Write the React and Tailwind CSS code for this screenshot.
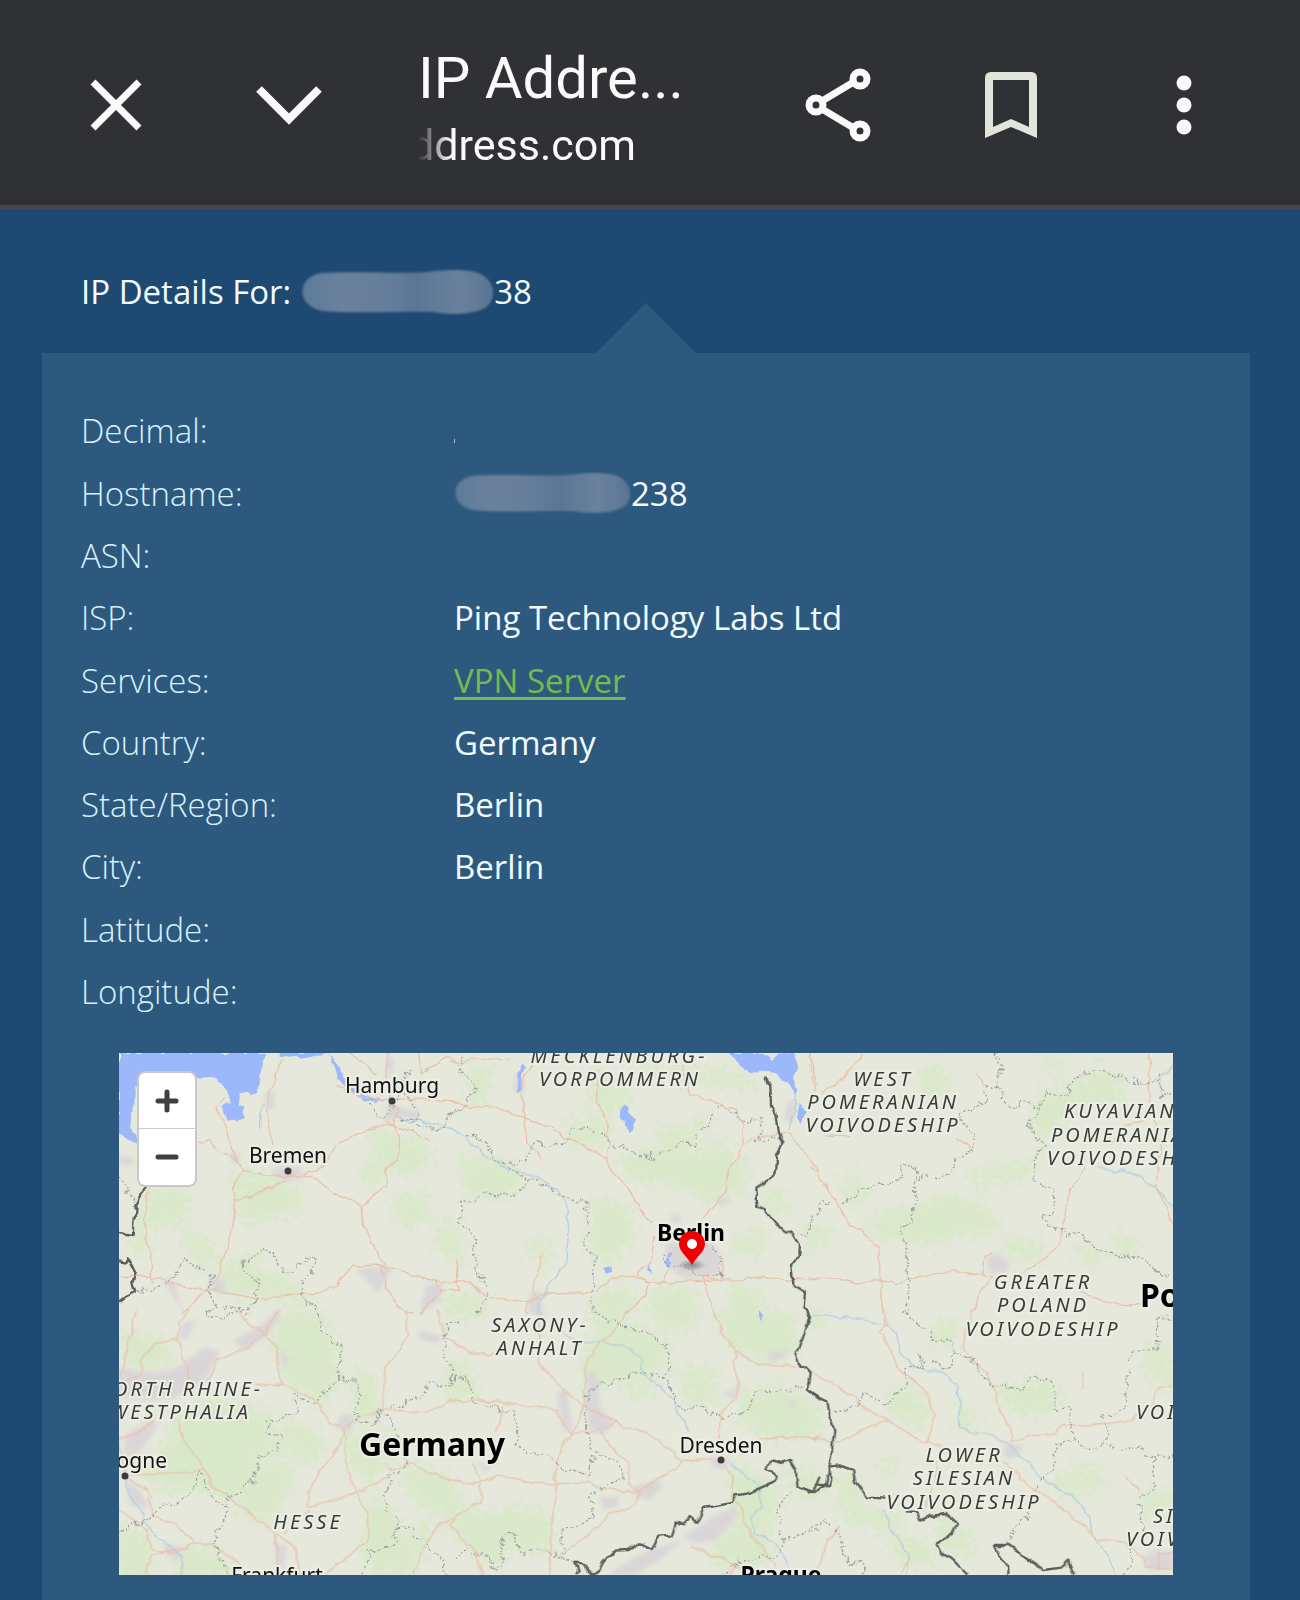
import React from "react";

const details = [
  { label: "Decimal:", tick: true },
  { label: "Hostname:", masked: true, value: "238" },
  { label: "ASN:" },
  { label: "ISP:", value: "Ping Technology Labs Ltd" },
  { label: "Services:", value: "VPN Server", link: true },
  { label: "Country:", value: "Germany" },
  { label: "State/Region:", value: "Berlin" },
  { label: "City:", value: "Berlin" },
  { label: "Latitude:" },
  { label: "Longitude:" },
];

// Map geometry, one entry per tile. x / y is the tile origin in map units.
const tiles = [
  {
    x: -28,
    y: -24,
    water: [
      "M28 24H470L455 70L448 130L440 144L420 150L412 140L388 146L384 180L404 184L402 212L384 230L352 222L336 200L340 184L364 176L352 140L328 112L322 98L300 96L240 100L84 120L66 186L62 250L84 268L82 296L54 282L28 270Z",
      "M510 24H662L640 30L602 38L576 44L548 36L514 32Z",
      "M654 24L690 68L700 96L736 132L780 158L806 168L800 174L760 164L716 136L684 98L668 54Z",
    ],
    forest: [
      "M120 450L220 430L240 490L200 540L140 530L110 490Z",
      "M230 560L290 590L330 640L290 660L240 610Z",
      "M370 390L480 400L560 440L560 490L470 510L400 520L390 470Z",
      "M790 270L860 270L850 350L770 420L760 390L800 340Z",
      "M880 280L960 310L950 360L860 380Z",
      "M860 470L930 450L950 520L880 540Z",
      "M340 670L430 640L440 740L360 740Z",
      "M440 690L560 720L570 750L450 750Z",
      "M985 560L1040 540L1050 640L1000 620Z",
      "M80 520L110 540L105 620L75 600Z",
    ],
    urban: [
      "M486 372L570 366L580 400L530 408L500 396Z",
      "M360 320L386 326L392 352L366 350Z",
      "M468 140L492 140L494 196L470 190Z",
      "M830 176L870 190L930 200L920 224L860 216L830 232Z",
      "M836 26L854 60L838 100L830 60Z",
      "M740 672L850 668L806 744Z",
      "M160 704L190 700L220 800Z",
      "M950 720L1000 716L990 770L930 800Z",
      "M300 700L345 706L350 745L310 740Z",
      "M28 330L80 344L60 362L28 358Z",
    ],
    rivers: ["M858 212L900 238L926 222L960 236L1006 244L1050 262", "M462 176L450 204L450 248"],
    roads: [
      "M28 694H120L180 712L260 732L340 740L440 762L520 758L580 744L640 748L680 716L730 664L810 660L900 688L980 708L1050 710",
      "M350 160L318 190L350 250L360 300L398 370L440 382L500 396L578 392L640 364L680 300L740 268L800 244L852 240L870 280L866 346L830 370L826 420L760 486L764 540L800 620L830 664",
      "M398 370L372 430L378 466L460 440L530 404",
      "M378 466L370 540L340 640L320 706L280 744L218 808",
      "M578 392L620 404L660 440L740 472L760 486",
      "M518 40L496 90L474 160L474 236L484 262L490 300",
      "M262 292L300 286L330 318L372 342L392 360",
      "M122 420L108 500L106 580L124 640L126 712",
      "M832 24V110L858 200L852 240L826 230",
      "M724 24L770 60L800 90",
      "M930 24L936 90L960 70L1010 36L1050 60",
      "M852 240L912 262L960 290",
      "M680 120L740 150L812 168L900 160L1050 172",
      "M814 664L830 730L866 788L920 808",
      "M980 708L992 744L940 790L930 808",
      "M1044 640L1040 710L1050 736L990 736",
    ],
    bounds: [
      "M78 738L150 722L208 690L216 636L260 668L310 690L296 740L320 780L290 808",
      "M398 660L410 646L490 616L510 670L560 674L600 630L620 640L612 680L574 710L590 770L624 790",
      "M398 660L436 690L440 770L400 796L340 790",
      "M780 176L800 216L826 226L840 200L880 110L900 80L870 120L930 210L912 232L870 226L940 244L1010 246L1012 210L1050 180",
      "M28 396L60 440L76 476",
    ],
    borders: ["M110 420L78 480L72 570L28 564", "M28 652L46 656L54 640L62 656L78 688L68 710L76 740L46 756L28 770"],
  },
  {
    x: 992,
    y: -24,
    water: [
      "M838 24H940L968 44L1000 24L1032 26L1046 50L1030 100L1044 140L1036 142L1010 110L972 86L938 80L900 84L872 60Z",
      "M218 60L226 66L214 100L220 140L202 140L204 82Z",
      "M532 180L540 192L536 206L562 222L552 250L536 262L528 236L510 220L512 196Z",
      "M1050 176L1068 200L1056 236L1042 214Z",
      "M462 668L484 664L486 680L464 686Z",
      "M600 652L608 684L596 672Z",
      "M658 620L668 634L660 644L668 660L650 668L646 650L656 640Z",
      "M932 794L942 810H928Z",
    ],
    forest: [
      "M60 60L120 90L110 150L70 170Z",
      "M40 340L160 360L220 400L170 450L60 450Z",
      "M510 340L650 320L760 330L800 300L890 370L880 440L820 440L780 470L690 410L560 400Z",
      "M430 470L530 490L540 570L480 650L430 620Z",
      "M360 240L460 230L460 290L380 300Z",
      "M420 150L490 200L540 160L500 140L440 90Z",
      "M620 260L720 250L760 220L740 280L650 300Z",
      "M560 40L620 90L700 80L760 90L830 80L900 110L910 130L820 110L700 100L600 80Z",
      "M860 580L940 570L930 610L870 620Z",
      "M440 750L540 740L550 808H430Z",
      "M610 740L720 730L720 808H610Z",
      "M240 590L290 600L290 650L260 640Z",
      "M0 750L90 760L100 808H0Z",
      "M940 440L1000 450L1010 500L960 490Z",
      "M850 720L940 760L900 808H840Z",
    ],
    urban: [
      "M650 600L700 580L780 590L820 640L800 690L700 700L650 660Z",
      "M664 510L694 512L690 534L662 530Z",
      "M196 84L226 110L222 144L192 140Z",
      "M240 744L276 740L280 808H236Z",
      "M800 460L836 456L840 476L806 480Z",
      "M1010 180L1036 160L1030 230L1006 232Z",
    ],
    rivers: [
      "M0 246L60 290L120 340L180 376L260 396L320 430L350 480L358 560L346 660L300 720L270 770L260 808",
      "M1040 142L1036 200L1014 250",
    ],
    roads: [
      "M0 170L60 184L140 190L226 222L300 246L360 284L420 310L470 346L500 390L552 450L570 500L612 530",
      "M226 222L232 296L280 338",
      "M270 24L224 100L216 160L228 224",
      "M448 70L440 170L470 220L478 290L472 346",
      "M700 60L720 150L800 172L860 196L880 240L880 296",
      "M760 520L820 450L840 370L880 300L940 272L1014 260L1070 330L1108 380",
      "M0 710H60L110 754L230 770L290 744L440 740L490 696L560 694L600 714L760 706L880 704L930 696L1000 704H1110",
      "M600 714L568 690L574 674L606 650L612 570",
      "M600 714L590 750L530 808",
      "M760 690L770 730L792 808",
      "M280 624L262 680L252 730L262 760L232 774L232 808",
      "M640 706L660 670M820 640L826 670L810 706L760 690",
      "M24 640V700",
      "M0 56L80 44L180 40",
      "M1080 24L1100 120",
    ],
    bounds: [
      "M0 210L40 180L80 140L70 110L30 80L28 24",
      "M50 270L70 260L120 320L170 360L230 350L240 300L350 290L370 250L450 260L490 296L560 324L620 334L700 290L730 300L800 200L830 180L870 220L940 224L944 260L910 290L1000 280",
      "M170 370L230 400L200 456L110 450L30 476L34 530L80 580L76 650L110 740L90 808",
      "M230 400L300 430L350 460L410 470L420 510L400 600L436 630L430 720L420 780L440 808",
      "M780 600L812 640L810 690L770 690L700 660L650 670L640 620",
      "M1040 566L1080 560L1110 490",
    ],
    borders: [
      "M950 98L962 120L964 180L978 210L984 260L998 294L982 330L980 370L960 404L920 428L922 470L914 484L940 490L980 540L1030 570L1048 600L1046 630L1024 660L1032 720L1066 740L1062 790L1080 815L1066 842",
    ],
  },
  {
    x: 2072,
    y: -24,
    water: [],
    forest: [
      "M330 80L390 70L400 130L350 140Z",
      "M690 160L790 130L850 80L930 90L920 170L800 170L740 240L700 290L670 240Z",
      "M190 530L300 500L400 460L480 470L560 530L520 560L440 550L380 600L310 580L200 570Z",
      "M480 390L560 370L680 360L660 390L500 410Z",
      "M110 380L140 420L170 450L120 470Z",
      "M590 590L680 600L690 640L600 630Z",
      "M0 540L50 570L40 610L0 600Z",
      "M800 610L870 630L850 660Z",
      "M920 570L970 600L940 640Z",
      "M710 40L760 60L740 80Z",
    ],
    urban: ["M530 640L560 626L600 650L590 680L540 684Z"],
    rivers: ["M860 366L930 376L1000 400L1050 440L1090 490", "M1090 60L1052 100L1056 160"],
    roads: [
      "M0 360L30 400L90 490L120 540L160 560L208 610L212 720L220 808",
      "M0 698L80 702L140 714L200 704L260 716L330 694L440 676L480 688L550 692L510 740L490 808",
      "M640 690L700 640L758 590L764 520L780 430L830 370",
      "M550 620L526 630L520 690",
      "M1020 24L1018 160L1050 300L1040 420L1060 470L1090 540",
      "M156 30L100 100L40 140",
      "M810 738L900 776L990 780",
      "M500 84L524 124M440 280L490 310M900 300L950 240L1020 224",
      "M0 60L16 140M50 270L120 272",
    ],
    bounds: [
      "M556 24L576 60L562 120L590 180L650 172L690 190L660 244L700 300L680 350L676 412L728 430L734 500L700 510L720 550L760 548L770 580L800 562L850 600L920 632L990 630L1056 694L1090 690",
      "M562 120L530 132L510 190L450 200L460 240L510 272L490 314L440 340L410 390L330 400L310 360L286 360L270 410L210 408L150 440L92 480",
      "M690 190L710 144L770 156L800 96L870 70L940 100L1008 116L1052 100L1056 150L1090 146",
      "M320 370L318 480L306 530L272 546L290 620L300 700L290 808",
      "M60 470L40 460L14 510L0 560",
    ],
    borders: [],
  },
  {
    x: -28,
    y: 771,
    water: [],
    forest: [
      "M500 30L560 0L620 10L680 100L684 200L640 280L600 250L520 210L530 150L490 100Z",
      "M200 330L330 270L480 320L470 370L520 400L450 440L420 520L350 560L300 530L180 540L100 490L180 400Z",
      "M28 70L150 90L180 150L110 190L60 150Z",
      "M720 380L860 390L830 440L800 500L730 470Z",
      "M440 500L540 440L520 560L450 640L380 590Z",
      "M790 570L860 620L870 700L800 800L760 700Z",
      "M28 650L120 700L110 795H28Z",
      "M220 720L330 730L360 795H200Z",
      "M880 460L1000 500L1050 570L1040 620L960 590L900 530Z",
      "M520 330L620 380L630 450L560 430Z",
      "M900 680L960 650L900 795H830Z",
      "M740 190L800 220L790 330L740 340Z",
    ],
    urban: [
      "M28 170L100 190L190 180L290 110L330 130L280 220L200 260L130 270L40 260Z",
      "M370 90L450 50L500 0L510 20L460 90L400 120Z",
      "M220 40L260 30L230 90L210 80Z",
      "M50 370L130 330L140 350L90 430L44 440Z",
      "M690 320L730 310L720 370L680 350Z",
      "M160 700L220 710L210 750L170 736Z",
      "M930 60L1000 80L980 100L930 90Z",
      "M500 700L530 710L520 780L500 760Z",
      "M510 120L540 140L520 180Z",
      "M50 510L90 540L120 600L60 580Z",
    ],
    rivers: ["M46 500L60 560L100 610L120 660L190 720L220 740L214 795"],
    roads: [
      "M80 0L60 80L40 190L28 260",
      "M240 0L210 40L206 90L240 210M206 86L130 100L98 150L92 190L28 230",
      "M376 0L460 72L510 0M460 72L400 120L320 150L290 220",
      "M460 72L500 110L512 220L440 220M512 220L620 270L660 340L710 360L690 400L640 470L590 550L596 590L680 570L740 550L830 500",
      "M890 0L890 80L830 180L818 300L730 330L708 366L712 480L744 550L776 620L774 690L700 750L650 795",
      "M60 494H150L284 480L310 530L370 570L420 610L500 670L560 720L570 795",
      "M200 330L230 400L284 480",
      "M500 670L504 795M520 670L600 600",
      "M28 390L110 350L130 330M46 500L40 440L28 400",
      "M110 560L130 620L190 640L260 700L120 740L110 795",
      "M46 500L110 540L130 570M28 600L110 660L122 720L190 730L260 700L320 710L390 765",
      "M980 0L1010 80L1050 110",
      "M820 300L960 306L1050 266",
      "M840 480L900 460L990 500L1050 520",
      "M912 795L950 700L980 650L1050 610",
    ],
    bounds: [
      "M290 10L320 30L360 10L420 6",
      "M620 0L640 60L690 110L686 200L620 280L560 260L560 310L470 340L480 370L520 380L500 420L450 440L430 520L350 570L350 620L310 700L350 760L340 795",
      "M686 200L750 210L740 330L780 340L830 300L930 260L960 220L1020 230L1030 180L1000 120L1010 40L1050 30",
      "M820 300L860 370L900 460L840 490L830 610L860 620L860 700L780 720L760 795",
      "M28 660L110 630L160 590L240 560L270 490L320 570L350 600",
      "M870 650L910 660L960 720L1000 750L1010 795",
    ],
    borders: [],
  },
  {
    x: 992,
    y: 771,
    water: ["M930 6L944 16L934 38L928 20Z"],
    forest: [
      "M440 80L560 120L590 190L500 200L410 240L410 150Z",
      "M430 20L510 50L640 90L650 170L600 180L570 110L460 60Z",
      "M800 30L900 0L1020 20L1040 110L960 150L860 110Z",
      "M700 190L780 180L800 260L720 280Z",
      "M880 260L1000 240L1100 290L1100 370L960 380L880 330Z",
      "M0 590L120 620L200 600L290 620L300 710L200 720L170 680L140 770L60 700L0 650Z",
      "M0 150L60 200L70 260L0 260Z",
      "M520 190L600 220L560 260Z",
      "M850 470L940 510L980 560L960 640L890 690L850 560Z",
      "M790 720L870 640L960 700L920 770L800 760Z",
      "M610 0L740 10L720 50L640 40Z",
      "M1000 480L1110 500V560L1040 540Z",
    ],
    urban: [
      "M320 250L350 240L370 360L340 360Z",
      "M414 180L440 190L450 290L490 340L470 370L420 360L410 290Z",
      "M550 530L620 510L640 530L600 570L560 560Z",
      "M450 560L510 560L500 590L460 600Z",
      "M700 680L790 620L860 590L860 620L800 690L740 700Z",
      "M780 440L840 450L820 480L790 470Z",
      "M950 130L1030 120L970 160Z",
      "M820 250L880 230L850 270Z",
      "M80 460L120 470L110 490Z",
      "M490 780L600 720L700 690L640 740L560 795H490Z",
      "M1010 270L1040 280L1030 300Z",
    ],
    rivers: [
      "M340 70L380 100L450 96L520 110L570 140L580 190L620 220L670 270L690 320L720 360",
      "M840 460L880 490L930 530L934 590L904 620L910 670L980 700L1020 770",
    ],
    roads: [
      "M0 90L60 130L140 130",
      "M270 0V160L320 220L360 250L400 290L490 330L520 350L590 370L640 400L700 450L790 446",
      "M540 0L480 70L420 140L404 200V280L380 350L340 410L316 490L320 560L304 640L300 795",
      "M0 270L120 274L250 290L330 302",
      "M0 512L80 520L150 496L230 514L320 522L400 516L470 536L560 548L620 510L700 456L750 446",
      "M320 302L340 350L370 370L450 366L500 330",
      "M455 370L500 430L536 460L540 520L570 550L560 590L480 610L420 670L340 730",
      "M790 0L820 70L860 120L920 160L1040 172",
      "M860 120L850 160L870 220L860 260L812 310L808 390",
      "M920 390L1000 382L1110 380",
      "M820 470L850 500V570L880 590L880 640L910 680L950 730L975 770",
      "M70 460L90 510L94 580L60 590L0 640",
      "M160 300L140 370M0 640L80 730L100 795",
      "M720 710L800 740L860 770L900 780M840 795L870 740",
    ],
    bounds: [
      "M430 0L480 40L540 50L600 80L650 100L662 170L640 200L590 190L530 200L450 230L408 250L404 330L410 400L440 430L500 450L530 510L480 520L430 550L430 620L370 650L330 660L340 740L380 770",
      "M640 200L670 250L690 300L720 290L800 316L880 310L920 250L1000 240L1070 230",
      "M0 200L60 210L80 290L180 300L210 370L200 400L230 430L300 440L350 480L410 490L430 440",
      "M10 740L60 720L130 740L130 780L160 760L160 690L190 670L210 720L300 720L340 740",
      "M1020 540L980 600L1000 690L980 740L870 750L820 790M1000 690L1110 660",
    ],
    borders: [
      "M1060 -8L1080 20L1066 70L1038 124L1052 160L1080 190L1072 240L1110 270",
      "M378 795L390 780L380 758L400 760L414 780L430 795L450 780L460 754L490 722L540 720L570 700L606 718L626 680L668 676L682 640L704 646L718 620L740 636L762 594L850 578L860 556L900 548L982 512L980 496L950 480L960 450L1000 460L1020 452L1038 480L1044 530L1090 546L1110 500",
    ],
  },
  {
    x: 2072,
    y: 771,
    water: [],
    forest: [
      "M230 260L300 230L350 300L330 350L260 310Z",
      "M570 240L700 210L740 240L720 300L620 300Z",
      "M750 500L850 480L880 520L800 550L740 530Z",
      "M380 50L430 40L430 100L370 90Z",
      "M1020 100L1080 130L1070 230L1020 180Z",
      "M90 500L140 520L150 600L270 620L240 660L110 610Z",
      "M250 680L340 700L370 760L260 740Z",
      "M450 290L490 320L480 350L450 330Z",
      "M220 430L250 450L240 500L220 480Z",
      "M390 620L470 680L480 740L400 700Z",
      "M1000 550L1080 560L1060 620L1010 600Z",
      "M0 10L40 20L30 40L0 40Z",
    ],
    urban: ["M580 420L600 396L640 410L620 440L590 446Z", "M1000 740L1040 720L1090 730V780H1010Z"],
    rivers: [
      "M0 16L100 20L220 40L264 70L274 130L310 170L400 186L440 230L452 290L450 350L480 370L550 372L600 410L660 460L700 510L800 570L840 620L846 670L890 730L920 795",
      "M220 600L240 650L300 740L290 795",
    ],
    roads: [
      "M220 0L230 40L210 70L240 120L270 180L340 230L374 310L356 400",
      "M10 190L130 260L160 290L240 336L340 396L400 410",
      "M0 380L80 400L180 350L240 336",
      "M490 0L466 60L460 120L530 190L560 250L570 300L604 360L606 400",
      "M606 400L650 380L730 370L760 344L860 346L960 330L1030 280L1040 240L1090 220",
      "M580 450L660 530L740 580L800 630L860 686L940 696L1000 740",
      "M380 460L378 510L340 600M640 550L690 580",
      "M816 240L822 194M940 496L990 540",
      "M20 795L50 700L90 650M270 795L300 740",
      "M1000 740L1010 776H1090M1045 776V730H1090",
    ],
    bounds: [
      "M280 0L320 40L360 60L370 100L420 90L436 130L410 180L370 160L320 130L350 160L296 180L280 230L220 280L170 254L150 290L70 304",
      "M436 130L480 150L550 230L640 236L660 200L730 220L736 296L780 300L796 390L740 400L730 480L690 510L650 630L610 650L590 700",
      "M796 390L830 424L880 400L990 420L1034 440L1090 440M1034 440L1030 530L990 570L990 630L1010 660",
      "M880 400L900 370L880 320L946 290L950 200L970 120L1040 120L1046 20L1090 20",
      "M0 660L50 630L90 660L100 740L160 770V795M960 700L966 770L940 795",
    ],
    borders: [
      "M0 545L18 546L50 520L66 430L74 356L56 310L50 274L0 250",
      "M18 524L62 526L66 500L56 470L90 466L130 480L136 514L170 562L230 566M288 604L322 606L332 632L360 618L410 612L440 640L430 670L384 700L400 734L430 750L474 795",
      "M596 795V770L570 736L556 708L600 708L640 738L680 764L700 780L766 772L774 752L786 780L794 795",
    ],
  },
];

const regionLabels = [
  [500, 10, "MECKLENBURG-"],
  [501, 33, "VORPOMMERN"],
  [764, 33, "WEST"],
  [764, 56, "POMERANIAN"],
  [764, 79, "VOIVODESHIP"],
  [924, 236, "GREATER"],
  [924, 259, "POLAND"],
  [924, 283, "VOIVODESHIP"],
  [421, 279, "SAXONY-"],
  [421, 302, "ANHALT"],
  [189, 476, "HESSE"],
  [845, 409, "LOWER"],
  [845, 432, "SILESIAN"],
  [845, 456, "VOIVODESHIP"],
  [945, 65, "KUYAVIAN-", "start"],
  [932, 89, "POMERANIAN", "start"],
  [928, 112, "VOIVODESHIP", "start"],
  [1017, 366, "VOIVODESHIP", "start"],
  [1034, 470, "SILESIAN", "start"],
  [1007, 493, "VOIVODESHIP", "start"],
  [144, 343, "NORTH RHINE-", "end"],
  [132, 366, "WESTPHALIA", "end"],
];

const cityLabels = [
  [273, 40, "Hamburg", "middle"],
  [169, 110, "Bremen", "middle"],
  [602, 400, "Dresden", "middle"],
  [158, 530, "Frankfurt", "middle"],
  [48, 415, "Cologne", "end"],
];

const cityDots = [
  [273, 48],
  [169, 118],
  [602, 407],
  [6, 423],
];

const layers = [
  { key: "forest", className: "fill-[#d9e8c9] stroke-[#d9e8c9] stroke-[18px]", filter: "url(#rough)" },
  { key: "urban", className: "fill-[#dad5d7]", filter: "url(#soft)" },
  { key: "water", className: "fill-[#9cb8fb]", filter: "url(#wiggle)" },
  { key: "rivers", className: "fill-none stroke-[#b7cfdf] stroke-[4px]", filter: "url(#wiggle)" },
  { key: "roads", className: "fill-none stroke-[#e8c3ae] stroke-[4px]", filter: "url(#wiggle)" },
  { key: "bounds", className: "fill-none stroke-[#9fa29e] stroke-[5px]", filter: "url(#jagged)", dash: "6 7" },
  { key: "borders", className: "fill-none stroke-[#5b5e5a] stroke-[7px]", filter: "url(#wiggle)" },
];

const MapCanvas = () => (
  <svg viewBox="0 0 1054 522" preserveAspectRatio="xMidYMid slice" className="block h-[522px] w-full" role="img" aria-label="Map of Berlin">
    <defs>
      <filter id="rough" x="-10%" y="-10%" width="120%" height="120%">
        <feTurbulence type="fractalNoise" baseFrequency="0.2" numOctaves="4" seed="4" />
        <feDisplacementMap in="SourceGraphic" scale="46" xChannelSelector="R" yChannelSelector="G" />
        <feGaussianBlur stdDeviation="0.8" />
      </filter>
      <filter id="soft" x="-10%" y="-10%" width="120%" height="120%">
        <feGaussianBlur stdDeviation="2" />
      </filter>
      <filter id="wiggle" x="-5%" y="-5%" width="110%" height="110%">
        <feTurbulence type="fractalNoise" baseFrequency="0.08" numOctaves="2" seed="9" />
        <feDisplacementMap in="SourceGraphic" scale="7" xChannelSelector="R" yChannelSelector="G" />
      </filter>
      <filter id="jagged" x="-5%" y="-5%" width="110%" height="110%">
        <feTurbulence type="fractalNoise" baseFrequency="0.08" numOctaves="2" seed="2" />
        <feDisplacementMap in="SourceGraphic" scale="14" xChannelSelector="R" yChannelSelector="G" />
      </filter>
      <radialGradient id="pinShadow">
        <stop offset="0" stopColor="#555" stopOpacity="0.6" />
        <stop offset="1" stopColor="#555" stopOpacity="0" />
      </radialGradient>
    </defs>

    <rect width="1054" height="522" fill="#e5e8db" />
    {layers.map((layer) => (
      <g key={layer.key} filter={layer.filter}>
        <g transform="scale(0.33333)" className={layer.className} strokeDasharray={layer.dash} strokeLinejoin="round">
          {tiles.map((tile, index) => (
            <g key={index} transform={`translate(${tile.x} ${tile.y})`}>
              {tile[layer.key].map((d) => (
                <path key={d} d={d} />
              ))}
            </g>
          ))}
        </g>
      </g>
    ))}

    <g className="fill-[#3a3c3a] stroke-[#eceee4] stroke-[4px] font-['Noto_Sans','Open_Sans',sans-serif] text-[20px] tracking-[3px] italic [paint-order:stroke]">
      {regionLabels.map(([x, y, text, anchor = "middle"]) => (
        <text key={`${x}-${y}`} x={x} y={y} textAnchor={anchor}>{text}</text>
      ))}
    </g>
    <g className="fill-[#111] stroke-[#eceee4] stroke-[4px] font-['Noto_Sans','Open_Sans',sans-serif] text-[21px] [paint-order:stroke]">
      {cityLabels.map(([x, y, text, anchor]) => (
        <text key={text} x={x} y={y} textAnchor={anchor}>{text}</text>
      ))}
    </g>
    {cityDots.map(([x, y]) => (
      <circle key={x} cx={x} cy={y} r="3.5" fill="#3c3c3c" />
    ))}
    <g className="fill-black stroke-[#eceee4] stroke-[4px] font-['Noto_Sans','Open_Sans',sans-serif] font-bold [paint-order:stroke]">
      <text x="572" y="188" textAnchor="middle" className="text-[23px]">Berlin</text>
      <text x="662" y="530" textAnchor="middle" className="text-[23px]">Prague</text>
      <text x="313" y="403" textAnchor="middle" className="text-[32px]">Germany</text>
      <text x="1021" y="254" className="text-[32px]">Poland</text>
    </g>

    <ellipse cx="573" cy="212" rx="14" ry="6" fill="url(#pinShadow)" />
    <path d="M573 212C569 204 560 199 560 191A13 13 0 0 1 586 191C586 199 577 204 573 212Z" fill="#f00000" />
    <circle cx="573" cy="191" r="5" fill="#fff" />
  </svg>
);

// Smudge that hides part of an address
const Smudge = ({ id, className }) => (
  <svg viewBox="0 0 190 46" preserveAspectRatio="none" className={className} aria-hidden="true">
    <defs>
      <linearGradient id={id}>
        <stop offset="0" stopColor="#5d7b9b" />
        <stop offset="0.2" stopColor="#6a819c" />
        <stop offset="0.4" stopColor="#667f9b" />
        <stop offset="0.6" stopColor="#5a7696" />
        <stop offset="0.82" stopColor="#6a819c" />
        <stop offset="1" stopColor="#587594" />
      </linearGradient>
      <filter id={`${id}-blur`}>
        <feGaussianBlur stdDeviation="1" />
      </filter>
    </defs>
    <path
      d="M20 4C50 2 100 5 125 3C145 0 172 0 180 7C192 15 192 32 181 39C168 46 145 46 130 43C100 42 50 45 22 42C-5 38 -5 8 20 4Z"
      fill={`url(#${id})`}
      filter={`url(#${id}-blur)`}
    />
  </svg>
);

const BarButton = ({ label, children }) => (
  <button type="button" aria-label={label} className="flex h-24 w-[173px] shrink items-center justify-center">
    {children}
  </button>
);

const TopBar = () => (
  <header className="flex h-[209px] items-center border-b-4 border-[#484551] bg-[#303134] pt-1 pr-[30px] pl-[29px] text-[#fafafa]">
    <BarButton label="Close">
      <svg viewBox="0 0 52 52" className="size-[52px] fill-none stroke-current stroke-[7px]">
        <path d="M3 3L49 49M49 3L3 49" />
      </svg>
    </BarButton>
    <BarButton label="Minimize">
      <svg viewBox="0 0 66 40" className="h-10 w-[66px] fill-none stroke-current stroke-[8px]">
        <path d="M3 4L33 34L63 4" />
      </svg>
    </BarButton>
    <div className="min-w-0 flex-1 pt-2 pl-[43px] font-[Roboto,sans-serif]">
      <h1 className="text-[58px] leading-[72px] whitespace-nowrap">IP Addre...</h1>
      <div className="flex w-[218px] justify-end overflow-hidden text-[43px] leading-[62px] [mask-image:linear-gradient(to_right,transparent,black_32px)]">
        address.com
      </div>
    </div>
    <BarButton label="Share">
      <svg viewBox="0 0 66 74" className="h-[74px] w-[66px] fill-none stroke-current stroke-[7px]">
        <path d="M17 33L47 15M17 41L47 59" />
        <circle cx="11" cy="37" r="7" />
        <circle cx="55" cy="11" r="7" />
        <circle cx="55" cy="63" r="7" />
      </svg>
    </BarButton>
    <BarButton label="Bookmark">
      <svg viewBox="0 0 52 66" className="h-[66px] w-[52px] fill-[#e2e5da]">
        <path fillRule="evenodd" d="M6 0H46Q52 0 52 6V66L26 55L0 66V6Q0 0 6 0ZM8 8V55L26 47L44 55V8Z" />
      </svg>
    </BarButton>
    <BarButton label="More options">
      <svg viewBox="0 0 16 60" className="h-[60px] w-4 fill-current">
        <circle cx="8" cy="8" r="7.5" />
        <circle cx="8" cy="30" r="7.5" />
        <circle cx="8" cy="52" r="7.5" />
      </svg>
    </BarButton>
  </header>
);

const App = () => {
  return (
    <div className="flex min-h-screen flex-col bg-[#1e4973] font-['Open_Sans','Noto_Sans',sans-serif] text-[33px] text-[#f2fbff]">
      <TopBar />
      <main className="flex flex-1 flex-col pr-[50px] pl-[42px]">
        <h2 className="flex items-center pt-[52px] pb-[30px] pl-[39px] leading-[62px]">
          IP Details For:
          <Smudge id="ip" className="ml-[10px] h-[46px] w-[193px]" />
          38
        </h2>

        <section className="relative flex-1 bg-[#2d597f] px-[39px] pt-[47px] pb-6">
          <div className="absolute -top-[50px] left-1/2 h-[51px] w-[102px] -translate-x-1/2 bg-[#2d597f] [clip-path:polygon(50%_0,100%_100%,0_100%)]" />
          <table className="h-[623px] w-full text-left">
            <tbody>
              {details.map((item) => (
                <tr key={item.label}>
                  <th scope="row" className="w-[373px] p-0 font-light text-[#d9f1fb]">{item.label}</th>
                  <td className="p-0">
                    <div className="flex items-center">
                      {item.tick && <span className="mt-5 h-1 w-px bg-[#a9c0d0]" />}
                      {item.masked && <Smudge id="host" className="h-[42px] w-[177px]" />}
                      {item.link ? (
                        <a href="#vpn" className="text-[#74bb4e] underline decoration-3 underline-offset-4">{item.value}</a>
                      ) : (
                        item.value
                      )}
                    </div>
                  </td>
                </tr>
              ))}
            </tbody>
          </table>

          <div className="relative mx-[38px] mt-[30px] overflow-hidden">
            <MapCanvas />
            <div className="absolute top-5 left-5 flex w-14 flex-col rounded-md bg-white text-[#3f3f3f] shadow-[0_0_0_2px_#c6cac4]">
              <button type="button" aria-label="Zoom in" className="flex h-14 items-center justify-center border-b border-[#ccc]">
                <svg viewBox="0 0 24 24" className="size-6 fill-none stroke-current stroke-[5px]" strokeLinecap="round">
                  <path d="M12 3V21M3 12H21" />
                </svg>
              </button>
              <button type="button" aria-label="Zoom out" className="flex h-14 items-center justify-center">
                <svg viewBox="0 0 24 24" className="size-6 fill-none stroke-current stroke-[5px]" strokeLinecap="round">
                  <path d="M3 12H21" />
                </svg>
              </button>
            </div>
          </div>
        </section>
      </main>
    </div>
  );
};

export default App;
